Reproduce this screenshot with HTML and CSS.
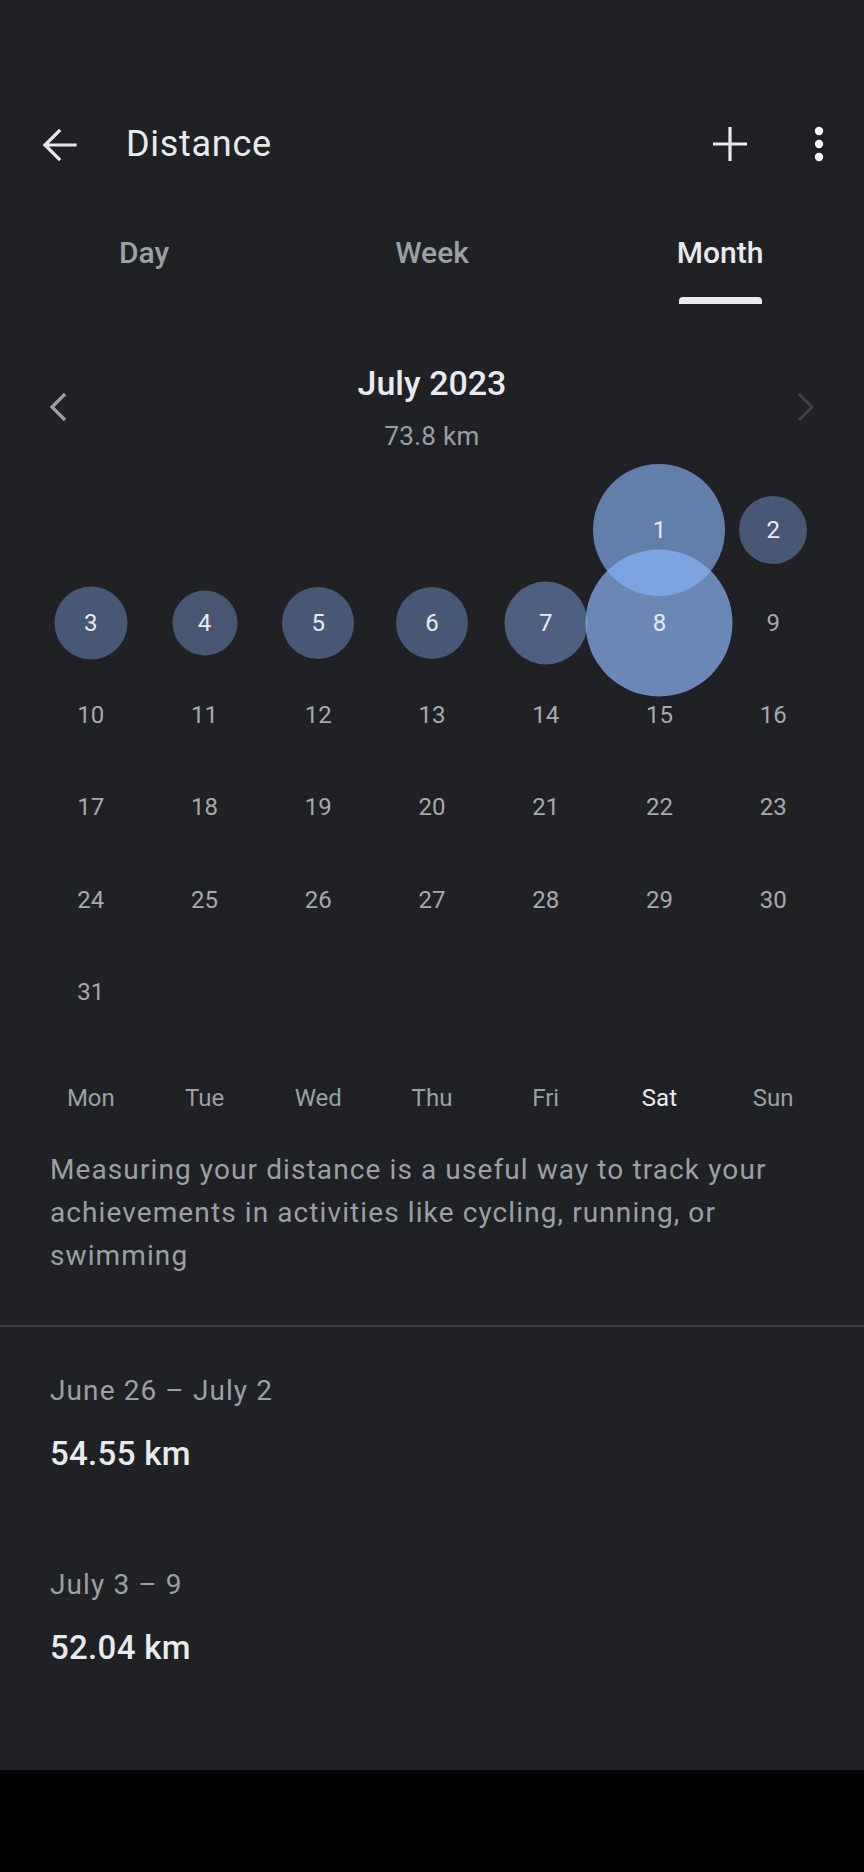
FILE: index.html
```html
<!DOCTYPE html>
<html lang="en">
<head>
<meta charset="utf-8">
<title>Distance</title>
<link rel="stylesheet" href="styles.css">
</head>
<body>
<div class="screen">
  <div class="app">
    <div class="status"></div>
    <header class="toolbar">
      <button class="icon-btn back" aria-label="Back">
        <svg width="48" height="48" viewBox="0 0 48 48"><path d="M40 25H10M24 11L10 25l14 14" fill="none" stroke="#e8eaed" stroke-width="3.2" stroke-linecap="square"/></svg>
      </button>
      <h1 class="title">Distance</h1>
      <div class="actions">
        <button class="icon-btn" aria-label="Add">
          <svg width="48" height="48" viewBox="0 0 48 48"><path d="M24 7v34M7 24h34" fill="none" stroke="#e8eaed" stroke-width="3.2"/></svg>
        </button>
        <button class="icon-btn more" aria-label="More">
          <svg width="24" height="48" viewBox="0 0 24 48"><circle cx="12" cy="11" r="4.2" fill="#fff"/><circle cx="12" cy="24" r="4.2" fill="#fff"/><circle cx="12" cy="37" r="4.2" fill="#fff"/></svg>
        </button>
      </div>
    </header>
    <nav class="tabs">
      <div class="tab"><span class="tab-label">Day</span></div>
      <div class="tab"><span class="tab-label">Week</span></div>
      <div class="tab active"><span class="tab-label">Month</span><span class="indicator"></span></div>
    </nav>

    <section class="month-nav">
      <button class="chev" aria-label="Previous month">
        <svg width="48" height="48" viewBox="0 0 48 48"><path d="M31 11L18 24l13 13" fill="none" stroke="#9aa0a6" stroke-width="3.2"/></svg>
      </button>
      <div class="month-head">
        <div class="month-title">July 2023</div>
        <div class="month-total">73.8 km</div>
      </div>
      <button class="chev" aria-label="Next month">
        <svg width="48" height="48" viewBox="0 0 48 48"><path d="M17 11l13 13-13 13" fill="none" stroke="#3c4043" stroke-width="3.2"/></svg>
      </button>
    </section>

    <div class="calendar">
      <div class="cell"></div>
      <div class="cell"></div>
      <div class="cell"></div>
      <div class="cell"></div>
      <div class="cell"></div>
      <div class="cell has"><span class="bubble" style="width:132px;height:132px;background:rgba(138,180,248,0.63)"></span><span class="num">1</span></div>
      <div class="cell has"><span class="bubble" style="width:68px;height:68px;background:rgba(138,180,248,0.38)"></span><span class="num">2</span></div>

      <div class="cell has"><span class="bubble" style="width:73px;height:73px;background:rgba(138,180,248,0.38)"></span><span class="num">3</span></div>
      <div class="cell has"><span class="bubble" style="width:65px;height:65px;background:rgba(138,180,248,0.37)"></span><span class="num">4</span></div>
      <div class="cell has"><span class="bubble" style="width:72px;height:72px;background:rgba(138,180,248,0.38)"></span><span class="num">5</span></div>
      <div class="cell has"><span class="bubble" style="width:72px;height:72px;background:rgba(138,180,248,0.38)"></span><span class="num">6</span></div>
      <div class="cell has"><span class="bubble" style="width:83px;height:83px;background:rgba(138,180,248,0.43)"></span><span class="num">7</span></div>
      <div class="cell has"><span class="bubble" style="width:147px;height:147px;background:rgba(138,180,248,0.70)"></span><span class="num">8</span></div>
      <div class="cell"><span class="num">9</span></div>

      <div class="cell"><span class="num">10</span></div>
      <div class="cell"><span class="num">11</span></div>
      <div class="cell"><span class="num">12</span></div>
      <div class="cell"><span class="num">13</span></div>
      <div class="cell"><span class="num">14</span></div>
      <div class="cell"><span class="num">15</span></div>
      <div class="cell"><span class="num">16</span></div>

      <div class="cell"><span class="num">17</span></div>
      <div class="cell"><span class="num">18</span></div>
      <div class="cell"><span class="num">19</span></div>
      <div class="cell"><span class="num">20</span></div>
      <div class="cell"><span class="num">21</span></div>
      <div class="cell"><span class="num">22</span></div>
      <div class="cell"><span class="num">23</span></div>

      <div class="cell"><span class="num">24</span></div>
      <div class="cell"><span class="num">25</span></div>
      <div class="cell"><span class="num">26</span></div>
      <div class="cell"><span class="num">27</span></div>
      <div class="cell"><span class="num">28</span></div>
      <div class="cell"><span class="num">29</span></div>
      <div class="cell"><span class="num">30</span></div>

      <div class="cell"><span class="num">31</span></div>
    </div>

    <div class="weekdays">
      <span>Mon</span><span>Tue</span><span>Wed</span><span>Thu</span><span>Fri</span><span class="today">Sat</span><span>Sun</span>
    </div>

    <p class="desc">Measuring your distance is a useful way to track your achievements in activities like cycling, running, or swimming</p>

    <hr class="divider">

    <div class="weeks">
      <div class="week">
        <div class="week-range">June 26 – July 2</div>
        <div class="week-value">54.55 km</div>
      </div>
      <div class="week">
        <div class="week-range">July 3 – 9</div>
        <div class="week-value">52.04 km</div>
      </div>
    </div>
  </div>
  <div class="navbar"></div>
</div>
</body>
</html>
```

FILE: styles.css
```css
* { box-sizing: border-box; }

html, body {
  margin: 0;
  padding: 0;
  background: #000;
}

body {
  font-family: Roboto, "Noto Sans", "Liberation Sans", sans-serif;
  color: #e8eaed;
  width: 864px;
}

.screen {
  width: 864px;
  height: 1872px;
  display: flex;
  flex-direction: column;
}

.app {
  height: 1770px;
  background: #202124;
  display: flex;
  flex-direction: column;
}

.navbar {
  flex: 1;
  background: #000;
}

.status { height: 96px; }

button {
  background: none;
  border: 0;
  padding: 0;
  margin: 0;
  cursor: pointer;
  display: flex;
  align-items: center;
  justify-content: center;
}

.toolbar {
  height: 96px;
  display: flex;
  align-items: center;
  padding: 0 33px 0 35px;
}

.icon-btn { width: 48px; height: 48px; }

.title {
  margin: 0 0 0 43px;
  font-size: 36px;
  font-weight: 400;
  letter-spacing: 0.7px;
  color: #e8eaed;
  flex: 1;
}

.actions {
  display: flex;
  align-items: center;
  gap: 53px;
}

.icon-btn.more { width: 24px; }

.tabs {
  height: 112px;
  display: grid;
  grid-template-columns: repeat(3, 1fr);
}

.tab {
  display: flex;
  flex-direction: column;
  align-items: center;
}

.tab-label {
  margin-top: 41px;
  line-height: 40px;
  font-size: 30px;
  font-weight: 500;
  color: #9aa0a6;
}

.tab.active .tab-label { color: #e8eaed; }

.indicator {
  margin-top: 24px;
  width: 83px;
  height: 7px;
  background: #e8eaed;
  border-radius: 4px 4px 0 0;
}

.month-nav {
  display: flex;
  align-items: center;
  padding: 57px 34px 0;
}

.chev { width: 48px; height: 48px; }

.month-head {
  flex: 1;
  display: flex;
  flex-direction: column;
  align-items: center;
}

.month-title {
  font-size: 34px;
  line-height: 44px;
  font-weight: 500;
  color: #e8eaed;
}

.month-total {
  margin-top: 14px;
  font-size: 26px;
  line-height: 34px;
  letter-spacing: 0.3px;
  color: #9aa0a6;
}

.calendar {
  margin: 31px 34px 0;
  display: grid;
  grid-template-columns: repeat(7, 1fr);
  grid-auto-rows: 92.4px;
}

.cell {
  position: relative;
  display: flex;
  align-items: center;
  justify-content: center;
}

.bubble {
  position: absolute;
  left: 50%;
  top: 50%;
  transform: translate(-50%, -50%);
  border-radius: 50%;
}

.num {
  position: relative;
  font-size: 24px;
  color: #a6a9ad;
}

.cell.has .num { color: #e8eaed; }

.weekdays {
  margin: 35.6px 34px 0;
  height: 48px;
  display: grid;
  grid-template-columns: repeat(7, 1fr);
  align-items: center;
  justify-items: center;
  font-size: 24px;
  color: #9aa0a6;
}

.weekdays .today { color: #e8eaed; }

.desc {
  margin: 26.5px 50px 0;
  font-size: 28px;
  line-height: 43px;
  letter-spacing: 1.1px;
  color: #9aa0a6;
}

.divider {
  margin: 47.5px 0 0;
  border: 0;
  height: 2px;
  background: #3c4043;
}

.weeks {
  padding: 0 50px;
  display: flex;
  flex-direction: column;
}

.week { margin-top: 44px; }
.week + .week { margin-top: 89px; }

.week-range {
  font-size: 28px;
  line-height: 40px;
  letter-spacing: 1.1px;
  color: #9aa0a6;
}

.week-value {
  margin-top: 21px;
  font-size: 33px;
  line-height: 44px;
  font-weight: 500;
  letter-spacing: 0.3px;
  color: #e8eaed;
}
```
